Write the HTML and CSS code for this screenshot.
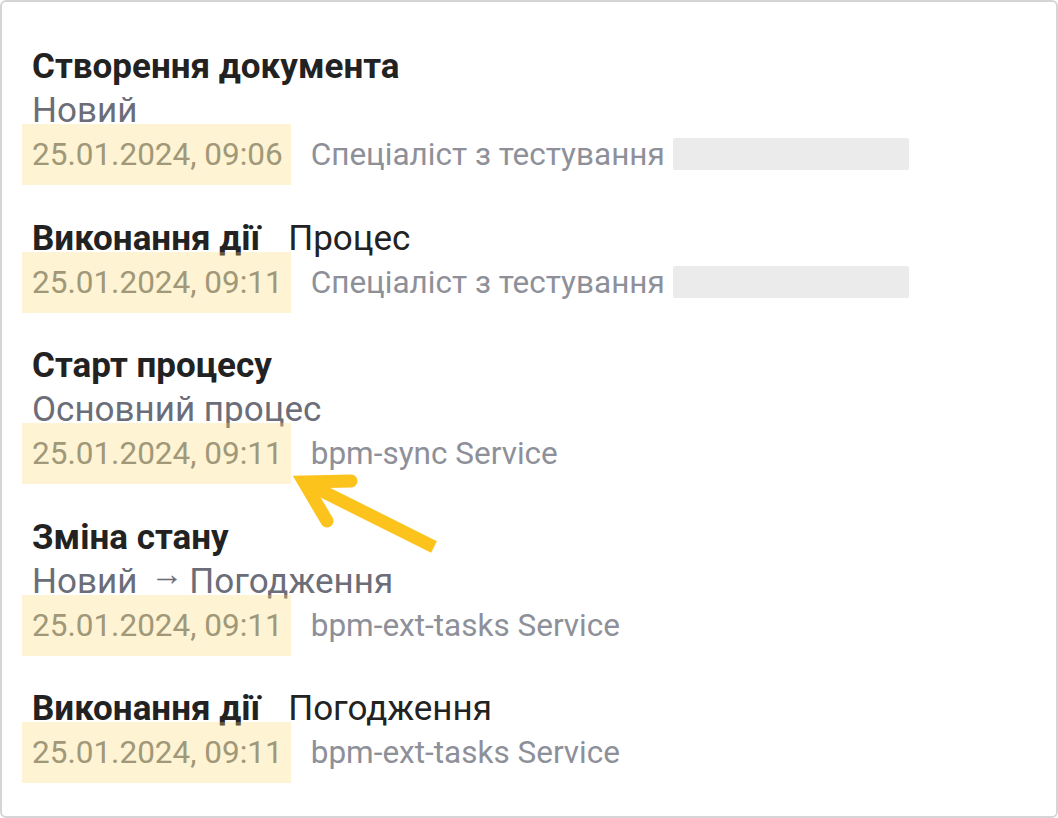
FILE: index.html
```html
<!DOCTYPE html>
<html lang="uk">
<head>
    <meta charset="UTF-8">
    <meta name="viewport" content="width=device-width, initial-scale=1.0">
    <title>Історія документа</title>
    <link rel="stylesheet" href="styles.css">
</head>
<body>
    <!-- 카드: історія документа -->
    <section class="history">
        <div class="entry">
            <div class="title">Створення документа</div>
            <div class="sub">Новий</div>
            <div class="meta">
                <span class="date">25.01.2024, 09:06</span><span class="who">Спеціаліст з тестування</span> <span class="hide"></span>
            </div>
        </div>
        <div class="entry">
            <div class="title">Виконання дії<span class="act">Процес</span></div>
            <div class="meta">
                <span class="date">25.01.2024, 09:11</span><span class="who">Спеціаліст з тестування</span> <span class="hide"></span>
            </div>
        </div>
        <div class="entry">
            <div class="title">Старт процесу</div>
            <div class="sub">Основний процес</div>
            <div class="meta">
                <span class="date">25.01.2024, 09:11</span><span class="who">bpm-sync Service</span>
            </div>
        </div>
        <div class="entry">
            <div class="title">Зміна стану</div>
            <div class="sub">Новий<span class="to">→</span>Погодження</div>
            <div class="meta">
                <span class="date">25.01.2024, 09:11</span><span class="who">bpm-ext-tasks Service</span>
            </div>
        </div>
        <div class="entry">
            <div class="title">Виконання дії<span class="act">Погодження</span></div>
            <div class="meta">
                <span class="date">25.01.2024, 09:11</span><span class="who">bpm-ext-tasks Service</span>
            </div>
        </div>

        <!-- 주석 화살표 (위에 겹침) -->
        <svg class="pointer" width="1058" height="818" viewBox="0 0 1058 818">
            <path d="M304 482 L434 547" stroke="#fbc31c" stroke-width="13" stroke-linecap="butt" fill="none"/>
            <polyline points="351,481 304,482 327,521" stroke="#fbc31c" stroke-width="13" stroke-linecap="round" stroke-linejoin="miter" fill="none"/>
        </svg>
    </section>
</body>
</html>
```

FILE: styles.css
```css
/* 기본 */
body{
    margin: 0;
    background: #fff;
}

/* 카드 박스 */
.history{
    position: relative;
    box-sizing: border-box;
    width: 1058px;
    height: 818px;
    padding: 43px 30px;
    border: 2px solid #d5d5d5;
    border-radius: 6px;
    font-family: Roboto, "Noto Sans", sans-serif;
    font-size: 31.5px;
    line-height: 44px;
    color: #222;
}

.entry{
    margin-bottom: 39.5px;
}

/* 제목 + 부제는 글씨가 조금 더 큼 */
.title{
    font-size: 35px;
    font-weight: 700;
    white-space: nowrap;
}
/* 제목 옆 보통 글씨 */
.title .act{
    margin-left: 28px;
    font-weight: 400;
}

.sub{
    font-size: 35px;
    color: #6b6d78;
    white-space: nowrap;
}
.sub .to{
    display: inline-block;
    margin: 0 6px 0 13px;
    font-size: 33px;
    line-height: 20px;
    vertical-align: 8px;
}

.meta{
    white-space: nowrap;
}
/* 날짜 - 노란 형광펜 */
.date{
    margin-left: -10px;
    padding: 12px 8px 12px 10px;
    background: rgba(252, 214, 110, 0.3);
    color: #a09878;
}
.who{
    margin-left: 20px;
    color: #8e9099;
}
/* 가려진 이름 */
.hide{
    display: inline-block;
    width: 236px;
    height: 32px;
    border-radius: 2px;
    background: #ebebeb;
    vertical-align: -5px;
}

/* 화살표 오버레이 */
.pointer{
    position: absolute;
    top: -2px;
    left: -2px;
    pointer-events: none;
}
```
